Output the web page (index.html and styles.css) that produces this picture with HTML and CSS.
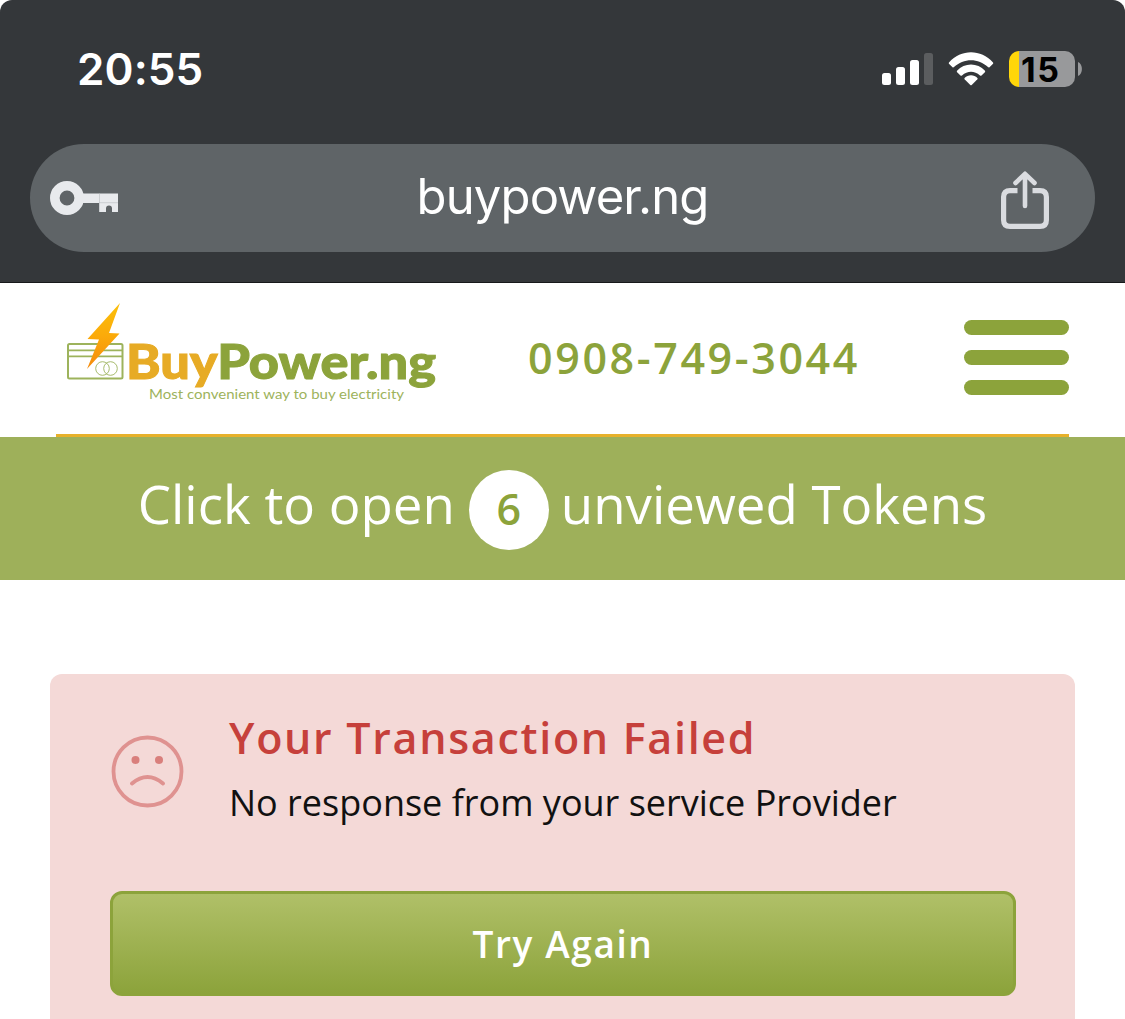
FILE: index.html
```html
<!DOCTYPE html>
<html lang="en">
<head>
    <meta charset="UTF-8">
    <meta name="viewport" content="width=device-width, initial-scale=1.0">
    <title>BuyPower.ng</title>
    <link rel="stylesheet" href="styles.css">
</head>
<body>
    <div class="browser">
        <div class="status-bar">
            <span class="time">20:55</span>
            <div class="status-icons">
                <svg class="signal" width="52" height="34" viewBox="0 0 52 34">
                    <rect x="0" y="21" width="9" height="12" rx="2.5" fill="#fff"/>
                    <rect x="14" y="15" width="9" height="18" rx="2.5" fill="#fff"/>
                    <rect x="28" y="8" width="9" height="25" rx="2.5" fill="#fff"/>
                    <rect x="42" y="1" width="9" height="32" rx="2.5" fill="#5b5d5f"/>
                </svg>
                <svg class="wifi" width="46" height="34" viewBox="0 0 46 34">
                    <path d="M1 10.5C13-3.2 33-3.2 45 10.5Q45.500 11.300 44.800 12L41.500 15.200Q40.700 15.800 40 15.100C30.500 5.800 15.500 5.800 6 15.100Q5.300 15.800 4.500 15.200L1.200 12Q.5 11.300 1 10.500Z" fill="#fff"/>
                    <path d="M9 18.800C16.500 10.300 29.500 10.300 37 18.800Q37.500 19.500 36.900 20.200L33.500 23.500Q32.700 24 32 23.400C26.500 18.600 19.500 18.600 14 23.400Q13.300 24 12.500 23.500L9.100 20.200Q8.500 19.500 9 18.800Z" fill="#fff"/>
                    <path d="M16.600 26C20 22.400 26 22.400 29.400 26Q30 26.700 29.400 27.300L23.700 32.900Q23 33.500 22.300 32.900L16.600 27.300Q16 26.700 16.600 26Z" fill="#fff"/>
                </svg>
                <div class="battery"><span>15</span></div>
                <svg class="battery-cap" width="5" height="14" viewBox="0 0 5 14">
                    <path d="M0 0C5.200 2 5.200 12 0 14Z" fill="#98999b"/>
                </svg>
            </div>
        </div>
        <div class="address-bar">
            <svg class="key" width="70" height="36" viewBox="0 0 70 36">
                <circle cx="17" cy="18" r="12.200" fill="none" stroke="#e8eaed" stroke-width="9.600"/>
                <path d="M33 13.500H68V32H62V28.500Q62 25.500 59 25.500T56 28.500V32H49V23H33Z" fill="#e8eaed"/>
                <path d="M49.500 13.500V32M49 22.700H68" fill="none" stroke="#b9bcbf" stroke-width=".6"/>
            </svg>
            <span class="url">buypower.ng</span>
            <svg class="share" width="50" height="60" viewBox="0 0 50 60" fill="none" stroke="#dadce0" stroke-width="5.200">
                <path d="M17.500 20.600H10Q3.600 20.600 3.600 27V50Q3.600 56.400 10 56.400H40Q46.400 56.400 46.400 50V27Q46.400 20.600 40 20.600H32.500"/>
                <path d="M25 4.500V36M15.500 13L25 3.800L34.500 13" stroke-width="4.600" stroke-linecap="round" stroke-linejoin="round"/>
            </svg>
        </div>
    </div>

    <header class="site-header">
        <svg class="logo" width="380" height="110" viewBox="0 0 380 110">
            <defs>
                <linearGradient id="bolt" x1="0" y1="0" x2="0" y2="1">
                    <stop offset="0" stop-color="#fbc00a"/>
                    <stop offset=".5" stop-color="#fbaa0a"/>
                    <stop offset="1" stop-color="#f58a0c"/>
                </linearGradient>
            </defs>
            <g fill="none" stroke="#9db35c" stroke-width="2">
                <rect x="12" y="48" width="54.500" height="34.500" rx="1.500"/>
                <path d="M12 54.300H66.500M12 60.300H66.500" stroke-width="1.800"/>
                <circle cx="46.500" cy="72.500" r="6.800" stroke-width=".9"/>
                <circle cx="54.500" cy="72.500" r="6.800" stroke-width=".9"/>
            </g>
            <path d="M64 7L31.500 43L43 43.500L31 73L63.500 37.500L53 37Z" fill="url(#bolt)"/>
            <text class="logo-name" x="70" y="83" textLength="310" lengthAdjust="spacingAndGlyphs"><tspan class="buy">Buy</tspan><tspan class="power">Power.ng</tspan></text>
            <text class="logo-tag" x="93" y="103" textLength="255" lengthAdjust="spacingAndGlyphs">Most convenient way to buy electricity</text>
        </svg>
        <span class="phone">0908-749-3044</span>
        <div class="menu">
            <span></span>
            <span></span>
            <span></span>
        </div>
    </header>

    <div class="tokens">
        <span class="before">Click to open</span>
        <span class="count">6</span>
        <span class="after">unviewed Tokens</span>
    </div>

    <div class="alert">
        <div class="message">
            <svg class="sad" width="76" height="76" viewBox="0 0 76 76">
                <g fill="none" stroke="#df9290" stroke-width="3.800">
                    <circle cx="38.500" cy="38.500" r="34"/>
                    <path d="M23 50.500Q38.500 37.500 54 50.500" stroke-width="4" stroke-linecap="round"/>
                </g>
                <circle cx="26.500" cy="27" r="4" fill="#d97f7c"/>
                <circle cx="50" cy="27" r="4" fill="#d97f7c"/>
            </svg>
            <div>
                <h1>Your Transaction Failed</h1>
                <p>No response from your service Provider</p>
            </div>
        </div>
        <button class="retry">Try Again</button>
    </div>
</body>
</html>
```

FILE: styles.css
```css
* {
    box-sizing: border-box;
}

body {
    font-family: "Open Sans", sans-serif;
    margin: 0;
    background-color: #fff;
}

.browser {
    height: 283px;
    background-color: #34373a;
    border-bottom: 1px solid #17191b;
    border-radius: 12px 12px 0 0;
    font-family: Inter, sans-serif;
    color: #fff;
}

.status-bar {
    height: 144px;
    padding: 0 42px 6px 77px;
    display: flex;
    align-items: center;
    justify-content: space-between;
}

.time {
    font-size: 44px;
    font-weight: 600;
    letter-spacing: 0.1px;
}

.status-icons {
    display: flex;
    align-items: center;
}

.wifi {
    margin-left: 14px;
}

.battery {
    width: 66px;
    height: 36px;
    margin: 0 3px 0 15px;
    border-radius: 10px;
    background: linear-gradient(to right, #ffd60a 10px, #98999b 10px);
    color: #000;
    font-size: 34px;
    font-weight: 700;
    line-height: 37px;
    padding-left: 12px;
    letter-spacing: 1.5px;
}

.address-bar {
    height: 108px;
    margin: 0 30px;
    padding: 0 45px 0 20px;
    border-radius: 54px;
    background-color: #5f6467;
    display: flex;
    align-items: center;
    justify-content: space-between;
}

.share {
    margin-top: 3px;
}

.url {
    font-size: 49px;
    letter-spacing: -0.85px;
    margin: -4px 0 0 5px;
}

.site-header {
    height: 154px;
    margin: 0 56px;
    padding-bottom: 2px;
    border-bottom: 3px solid #e7b12b;
    display: flex;
    align-items: center;
    justify-content: space-between;
    color: #8ca33b;
}

.logo {
    margin-top: -14px;
}

.logo-name {
    font: 900 47px Lato, sans-serif;
    stroke-width: 1px;
}

.buy {
    fill: #e7ab25;
    stroke: #e7ab25;
}

.power {
    fill: #8ca33b;
    stroke: #8ca33b;
}

.logo-tag {
    font: 400 14px Lato, sans-serif;
    fill: #9db35c;
}

.phone {
    font-size: 43px;
    font-weight: 600;
    letter-spacing: 2.6px;
    margin-left: -12px;
}

.menu {
    width: 105px;
    display: flex;
    flex-direction: column;
    gap: 15px;
}

.menu span {
    height: 15px;
    border-radius: 8px;
    background-color: #8ca33b;
}

.tokens {
    height: 143px;
    background-color: #9eb05a;
    color: #fff;
    display: flex;
    align-items: center;
    justify-content: center;
    font-size: 52.8px;
}

.before, .after {
    margin-top: -10px;
    white-space: nowrap;
}

.count {
    width: 80px;
    height: 80px;
    margin: 3px 12px 0 14px;
    border-radius: 50%;
    background-color: #fff;
    color: #8ca33b;
    font-size: 43px;
    font-weight: 600;
    line-height: 78px;
    text-align: center;
}

.alert {
    height: 345px;
    margin: 94px 50px 0;
    padding: 34px 59px 0 60px;
    border-radius: 12px 12px 0 0;
    background-color: #f4d9d7;
}

.message {
    display: flex;
    height: 183px;
}

.sad {
    margin: 25px 44px 0 -1px;
}

h1 {
    margin: 0;
    color: #c6403b;
    font-size: 43px;
    font-weight: 600;
    line-height: 60px;
    letter-spacing: 1.7px;
}

p {
    margin: 8px 0 0;
    color: #111;
    font-size: 36px;
    line-height: 54px;
}

.retry {
    display: block;
    width: 100%;
    height: 105px;
    border: 3px solid #8ca33b;
    border-radius: 12px;
    background: linear-gradient(#b0c068, #8ca33b);
    color: #fff;
    font-family: inherit;
    font-size: 37px;
    font-weight: 600;
    letter-spacing: 1.6px;
}
```
